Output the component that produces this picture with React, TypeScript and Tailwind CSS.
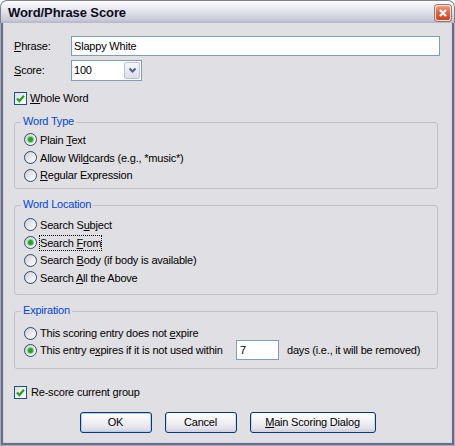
import type { ReactNode } from "react";

const Radio = ({ checked }: { checked?: boolean }) => (
  <span className="flex h-[13px] w-[13px] shrink-0 items-center justify-center rounded-full border border-[#2c4a6e] bg-[linear-gradient(135deg,#cfced6_0%,#ecebef_55%,#ffffff_100%)]">
    {checked && (
      <span className="h-[5px] w-[5px] rounded-full bg-[#2aa22a] shadow-[0_0_0_1px_#86d386]" />
    )}
  </span>
);

const Check = () => (
  <span className="flex h-[13px] w-[13px] shrink-0 items-center justify-center border border-[#1c5180] bg-[linear-gradient(135deg,#dcdbe2_0%,#f4f4f6_60%,#ffffff_100%)]">
    <svg width="11" height="11" viewBox="0 0 11 11">
      <path d="M2 5.5 L4.3 8 L9 2.8" fill="none" stroke="#21a121" strokeWidth="2.2" />
    </svg>
  </span>
);

const Option = ({
  checked,
  focused,
  children,
}: {
  checked?: boolean;
  focused?: boolean;
  children: ReactNode;
}) => (
  <div className="flex h-[17.7px] items-center">
    <Radio checked={checked} />
    <span
      className={`ml-[2px] border leading-[14px] ${
        focused ? "border-dotted border-black" : "border-transparent"
      }`}
    >
      {children}
    </span>
  </div>
);

const Group = ({
  title,
  className,
  children,
}: {
  title: string;
  className: string;
  children: ReactNode;
}) => (
  <div
    className={`relative w-[424px] rounded-[3px] border border-[#c3bfc9] pl-[9px] ${className}`}
  >
    <span className="absolute left-[6px] top-[-8px] bg-[#e0dfe3] px-[2px] leading-[13px] text-[#0046d5]">
      {title}
    </span>
    {children}
  </div>
);

const XpButton = ({
  children,
  width,
  isDefault,
}: {
  children: ReactNode;
  width: string;
  isDefault?: boolean;
}) => (
  <button
    className={`flex h-[21px] ${width} items-center justify-center rounded-[3px] border border-[#003c74] bg-[linear-gradient(180deg,#ffffff_0%,#f3f3f6_40%,#e3e2ea_80%,#cfcdd9_100%)] ${
      isDefault
        ? "shadow-[inset_0_0_0_1px_#b9cbee]"
        : "shadow-[inset_0_-1px_0_1px_#d6d4de]"
    }`}
  >
    {children}
  </button>
);

export default function App() {
  return (
    <div className="flex h-[446px] w-[455px] flex-col bg-white font-['Liberation_Sans',Arial,sans-serif] text-[11px] tracking-[-0.2px] text-black">
      <div className="flex h-[23px] shrink-0 items-center rounded-t-[7px] border-x border-t border-[#7d7f97] bg-[linear-gradient(180deg,#ffffff_0%,#efeff5_25%,#dedee8_55%,#cacad9_85%,#b4b5c8_100%)] pl-[7px] pt-[2px]">
        <span className="text-[13px] font-bold tracking-[-0.1px] text-[#0b0b1a]">
          Word/Phrase Score
        </span>
        <span className="ml-auto mr-[3px] flex h-[16px] w-[16px] items-center justify-center rounded-[3px] border border-[#f4e6e2] bg-[linear-gradient(180deg,#ef9d84_0%,#dd6a48_45%,#c8441f_100%)] shadow-[0_0_0_1px_#b46a58]">
          <svg width="10" height="10" viewBox="0 0 10 10">
            <path d="M2 2 L8 8 M8 2 L2 8" stroke="#ffffff" strokeWidth="2.2" />
          </svg>
        </span>
      </div>

      <div className="flex flex-1 flex-col bg-[#e0dfe3] px-[4px] pb-[4px] shadow-[inset_1px_0_0_#a9abbe,inset_-1px_0_0_#a9abbe,inset_0_-1px_0_#a9abbe,inset_3px_0_0_#6a6d88,inset_-3px_0_0_#6a6d88,inset_0_-3px_0_#6a6d88,inset_4px_0_0_#d2d2de,inset_-4px_0_0_#d2d2de,inset_0_-4px_0_#d2d2de]">
        <div className="flex flex-col pl-[10px]">
          <div className="mt-[13px] flex h-[20px] items-center">
            <span className="w-[57px]">
              <u>P</u>hrase:
            </span>
            <div className="flex h-[20px] w-[369px] items-center border border-[#7f9db9] bg-white pl-[2px]">
              Slappy White
            </div>
          </div>

          <div className="mt-[4px] flex h-[21px] items-center">
            <span className="w-[57px]">
              <u>S</u>core:
            </span>
            <div className="flex h-[21px] w-[71px] items-center border border-[#7f9db9] bg-white pl-[2px]">
              <span className="flex-1">100</span>
              <span className="mr-[1px] flex h-[17px] w-[16px] items-center justify-center rounded-[2px] border border-[#bcc4da] bg-[linear-gradient(180deg,#f6f6fa_0%,#dcdde8_100%)]">
                <svg width="9" height="7" viewBox="0 0 9 7">
                  <path d="M1.5 1.5 L4.5 4.5 L7.5 1.5" fill="none" stroke="#4d6185" strokeWidth="2" />
                </svg>
              </span>
            </div>
          </div>

          <div className="mt-[11px] flex h-[13px] items-center">
            <Check />
            <span className="ml-[3px]">
              <u>W</u>hole Word
            </span>
          </div>

          <Group title="Word Type" className="mt-[17px] pb-[4px] pt-[8px]">
            <Option checked>
              Plain <u>T</u>ext
            </Option>
            <Option>
              Allow Wil<u>d</u>cards (e.g., *music*)
            </Option>
            <Option>
              <u>R</u>egular Expression
            </Option>
          </Group>

          <Group title="Word Location" className="mt-[16px] pb-[7px] pt-[10px]">
            <Option>
              Search S<u>u</u>bject
            </Option>
            <Option checked focused>
              Search <u>F</u>rom
            </Option>
            <Option>
              Search <u>B</u>ody (if body is available)
            </Option>
            <Option>
              Search <u>A</u>ll the Above
            </Option>
          </Group>

          <Group title="Expiration" className="mt-[16px] pb-[9px] pt-[13px]">
            <div className="flex h-[17px] items-center">
              <Radio />
              <span className="ml-[2px] border border-transparent leading-[14px]">
                This scoring entry does not <u>e</u>xpire
              </span>
            </div>
            <div className="flex h-[17px] items-center">
              <div className="flex w-[212px] items-center">
                <Radio checked />
                <span className="ml-[2px] border border-transparent leading-[14px]">
                  This entry e<u>x</u>pires if it is not used within
                </span>
              </div>
              <div className="flex h-[20px] w-[43px] shrink-0 items-center border border-[#7f9db9] bg-white pl-[3px]">
                7
              </div>
              <span className="ml-[8px]">days (i.e., it will be removed)</span>
            </div>
          </Group>

          <div className="mt-[17px] flex h-[13px] items-center">
            <Check />
            <span className="ml-[4px]">Re-score current group</span>
          </div>
        </div>

        <div className="mt-[13px] flex justify-center gap-[13px]">
          <XpButton width="w-[72px]" isDefault>
            OK
          </XpButton>
          <XpButton width="w-[72px]">Cancel</XpButton>
          <XpButton width="w-[126px]">
            <span>
              <u>M</u>ain Scoring Dialog
            </span>
          </XpButton>
        </div>
      </div>
    </div>
  );
}
